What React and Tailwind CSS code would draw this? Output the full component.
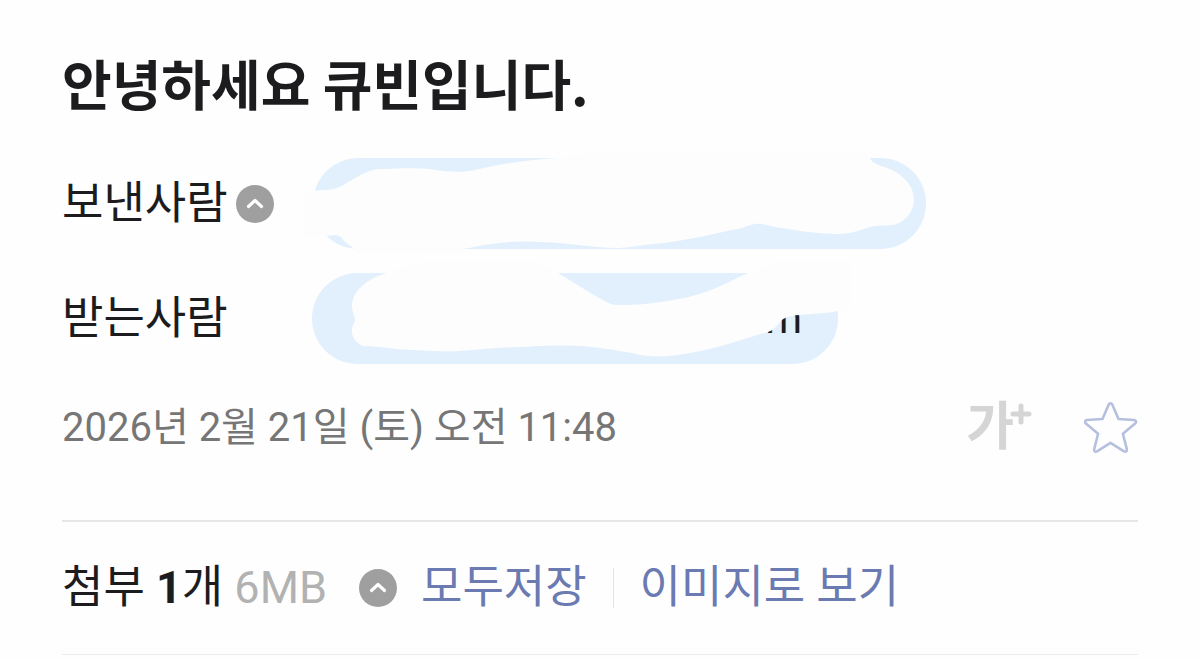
import { useState } from 'react'

function ToggleButton({ label }) {
  const [open, setOpen] = useState(true)

  return (
    <button
      type="button"
      aria-label={label}
      aria-expanded={open}
      onClick={() => setOpen(!open)}
      className="flex size-[38px] shrink-0 items-center justify-center rounded-full bg-[#9f9f9f]"
    >
      <svg width="38" height="38" viewBox="0 0 38 38" fill="none" className={open ? '' : 'rotate-180'}>
        <path d="M12.5 21.5L19 15.5L25.5 21.5" stroke="#fefefe" strokeWidth="3.2" strokeLinecap="round" strokeLinejoin="round" />
      </svg>
    </button>
  )
}

// Hand-drawn strokes that hide the sender address
function SenderMask() {
  return (
    <svg width="640" height="110" viewBox="300 150 640 110" className="pointer-events-none absolute -left-[13px] -top-2" aria-hidden="true">
      <path
        fill="#fdfdfd"
        d="M303 191L327 190Q338 189 345 184C358 177 366 169 383 169C402 168 420 168 430 169C445 172 463 173 475 170C500 164 525 160 558 158L600 152H860Q868 154 871 160C874 165 884 166 892 170C906 177 914 188 914 200C914 210 908 218 899 223C891 227 883 225 874 226C862 229 852 234 839 234C815 234 795 230 775 227C766 225 762 223 755 224C748 225 742 229 732 230C710 235 690 239 665 243C648 244 634 247 619 248C590 248 565 242 540 242C515 240 492 243 463 249V253H358Q352 246 345 242Q341 235 335 235L326 236L303 236Z"
      />
    </svg>
  )
}

// Hand-drawn strokes that hide the recipient address
function RecipientMask() {
  return (
    <svg width="560" height="120" viewBox="300 255 560 120" className="pointer-events-none absolute -left-[12px] -top-[18px]" aria-hidden="true">
      <path
        fill="#fdfdfd"
        d="M387 273C368 278 352 291 352 306C352 312 355 316 355 320C354 324 351 327 352 333C353 339 358 345 364 346C380 346 396 350 415 350C433 351 447 352 460 351C480 350 500 347 525 347C548 345 575 345 591 347C610 349 628 352 641 355C662 359 690 354 717 347C735 342 748 338 764 333C778 331 778 319 788 317C800 313 820 315 838 311H850V262L778 262L748 273C724 284 705 295 678 299C655 304 635 305 616 305C608 304 600 298 592 294L558 273L540 262H420Z"
      />
    </svg>
  )
}

function FontSizeButton() {
  return (
    <button type="button" aria-label="글자 크게" className="flex items-start text-[52px]/[58px] font-bold text-[#d5d5d5]">
      <span>가</span>
      <svg width="22" height="22" viewBox="0 0 22 22" className="-ml-1 mt-1" aria-hidden="true">
        <path d="M11 3V19M3 11H19" stroke="currentColor" strokeWidth="5" strokeLinecap="round" />
      </svg>
    </button>
  )
}

function StarButton() {
  const [starred, setStarred] = useState(false)

  return (
    <button type="button" aria-label="중요 표시" aria-pressed={starred} onClick={() => setStarred(!starred)}>
      <svg width="54" height="54" viewBox="0 0 54 54" fill={starred ? '#b5c0de' : 'none'}>
        <path
          d="M24.6 3.8Q26.5 0.8 28.4 3.8L34.5 18L50.2 19Q53.4 20 51.1 22.5L38.9 32.7L42.9 48.4Q43 51.7 40 50.4L26.5 41.8L13 50.4Q10 51.7 10.1 48.4L14.1 32.7L1.9 22.5Q-0.2 20 2.8 19L18.5 18Z"
          stroke="#b5c0de"
          strokeWidth="2.6"
          strokeLinejoin="round"
        />
      </svg>
    </button>
  )
}

export default function App() {
  return (
    <main className="min-h-screen overflow-hidden bg-[#fefefe] px-[62px] pt-11 font-[Roboto,'Noto_Sans_CJK_KR',sans-serif] text-[#1c1c1e]">
      <header className="border-b-2 border-[#e6e6e6] pb-[62px]">
        <h1 className="font-['Noto_Sans_CJK_KR',sans-serif] text-[54px]/[78px] font-bold">안녕하세요 큐빈입니다.</h1>

        <div className="mt-9 flex flex-col gap-6 text-[45px]/[60px]">
          <div className="flex items-center">
            <div className="flex w-[251px] shrink-0 items-center gap-2">
              <span>보낸사람</span>
              <ToggleButton label="보낸사람 상세" />
            </div>
            <button type="button" aria-label="보낸사람 주소" className="relative h-[91px] w-[613px] rounded-full bg-[#e2f0fd]">
              <SenderMask />
            </button>
          </div>
          <div className="flex items-center">
            <span className="w-[250px] shrink-0">받는사람</span>
            <button type="button" aria-label="받는사람 주소" className="relative h-[91px] w-[526px] rounded-full bg-[#e2f0fd] pr-9 text-right text-[42px]">
              m
              <RecipientMask />
            </button>
          </div>
        </div>

        <div className="mt-[34px] flex items-center justify-between">
          <time dateTime="2026-02-21T11:48" className="text-[40px]/[60px] text-[#767676]">
            2026년 2월 21일 (토) 오전 11:48
          </time>
          <div className="flex items-center gap-[52px]">
            <FontSizeButton />
            <StarButton />
          </div>
        </div>
      </header>

      <section className="flex items-center border-b border-[#ececec] py-8 text-[45px]/[68px]">
        <p>
          첨부 <strong className="font-bold">1</strong>개 <span className="text-[#b2b2b2]">6MB</span>
        </p>
        <div className="ml-8 mr-6 flex">
          <ToggleButton label="첨부파일 목록" />
        </div>
        <a href="#save" className="text-[#6b7ab1]">모두저장</a>
        <span className="mx-[26px] h-10 w-px bg-[#e4e4e4]" />
        <a href="#images" className="text-[#6b7ab1]">이미지로 보기</a>
      </section>
    </main>
  )
}
